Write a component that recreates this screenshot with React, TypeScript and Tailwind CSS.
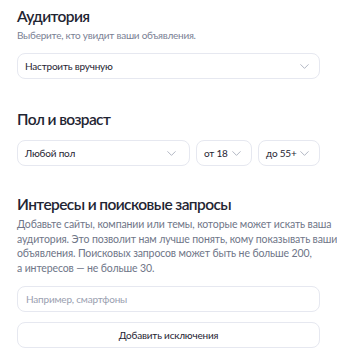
import { ChevronDown } from "lucide-react";

function Select({ label, className }: { label: string; className?: string }) {
  return (
    <div
      className={
        "flex h-[26px] shrink-0 items-center justify-between rounded-lg border border-[#e6e8f0] bg-white px-[7px] " +
        (className ?? "")
      }
    >
      <span className="whitespace-nowrap text-[10px] tracking-[-0.2px] text-[#1f2533]">{label}</span>
      <ChevronDown className="h-[15px] w-[15px] shrink-0 text-[#a0a6b5]" strokeWidth={1.3} />
    </div>
  );
}

export default function App() {
  return (
    <div
      className="min-h-[360px] bg-white px-[17px] pt-[4px] pb-4 text-[#1f2533]"
      style={{ fontFamily: "Lato, 'Noto Sans', sans-serif" }}
    >
      <h2 className="text-[15.5px] leading-[24px] font-semibold tracking-[-0.6px]">Аудитория</h2>
      <p className="mt-[0px] text-[10px] leading-[14px] tracking-[-0.25px] text-[#7a8194]">
        Выберите, кто увидит ваши объявления.
      </p>
      <Select label="Настроить вручную" className="mt-[11px]" />

      <h2 className="mt-[28px] text-[15.5px] leading-[24px] font-semibold tracking-[-0.6px]">
        Пол и возраст
      </h2>
      <div className="mt-[9px] flex gap-[6px]">
        <Select label="Любой пол" className="flex-1 shrink pr-[10px]" />
        <Select label="от 18" className="w-[56px]" />
        <Select label="до 55+" className="w-[62px]" />
      </div>

      <h2 className="mt-[26px] text-[15.5px] leading-[24px] font-semibold tracking-[-0.6px]">
        Интересы и поисковые запросы
      </h2>
      <p className="mt-[1px] whitespace-nowrap text-[10.5px] leading-[14.5px] tracking-[-0.12px] text-[#6f7688]">
        Добавьте сайты, компании или темы, которые может искать ваша
        <br />
        аудитория. Это позволит нам лучше понять, кому показывать ваши
        <br />
        объявления. Поисковых запросов может быть не больше 200,
        <br />а интересов — не больше 30.
      </p>

      <div className="mt-[11px] flex h-[26px] items-center rounded-lg border border-[#e6e8f0] px-[8px]">
        <span className="text-[10px] tracking-[-0.2px] text-[#9aa0b0]">Например, смартфоны</span>
      </div>
      <button className="mt-[10px] flex h-[26px] w-full items-center justify-center rounded-lg border border-[#e6e8f0] bg-white text-[10px] tracking-[-0.2px] text-[#1f2533]">
        Добавить исключения
      </button>
    </div>
  );
}
